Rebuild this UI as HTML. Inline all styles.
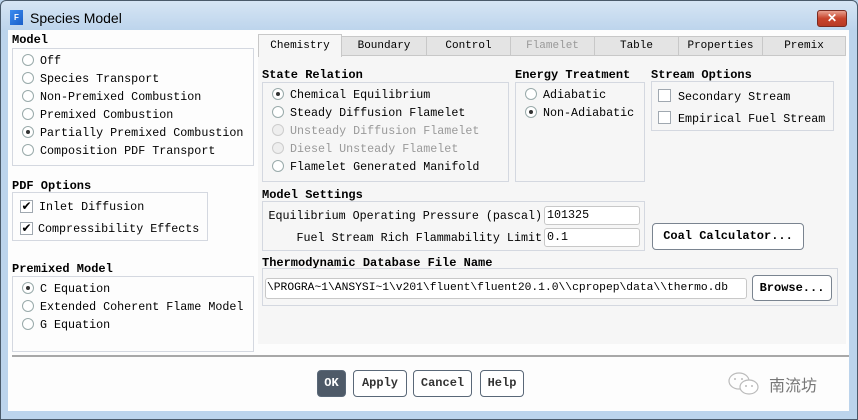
<!DOCTYPE html>
<html><head><meta charset="utf-8"><style>
*{box-sizing:border-box;margin:0;padding:0}
body{width:858px;height:420px;overflow:hidden;background:#bcd4ec;font-family:"Liberation Mono","Noto Sans CJK SC",monospace;font-size:11.7px;color:#000;position:relative}
.a{position:absolute;white-space:nowrap}
.frame{position:absolute;left:0;top:0;width:858px;height:420px;border:1px solid #4a5a6a;border-radius:6px 6px 0 0;background:linear-gradient(#d6e5f4,#bcd4ec 30px)}
.content{position:absolute;left:8px;top:30px;width:841px;height:381px;background:#fdfdfd}
.lbl{font-weight:bold;font-size:12px}
.box{position:absolute;border:1px solid #d4d8e0}
.r{position:absolute;width:12px;height:12px;border:1px solid #9aa;border-radius:50%;background:#fff}
.r.on::after{content:"";position:absolute;left:3px;top:3px;width:4px;height:4px;border-radius:50%;background:#333}
.r.dis{background:#eee;border-color:#ccc}
.cb{position:absolute;width:13px;height:13px;border:1px solid #a0a8b0;background:#fff;font-size:12px;line-height:11px;text-align:center;font-family:"DejaVu Sans",sans-serif}
.gray{color:#999}
.tab{position:absolute;top:36px;height:20px;border:1px solid #c8c8c8;background:#e4e4e4;text-align:center;font-size:11px;line-height:19px}
.inp{position:absolute;border:1px solid #c8c8c8;border-radius:3px;background:#fff;padding-left:2px;line-height:17px}
.btn{position:absolute;border:1px solid #5a6878;border-radius:4px;background:#fff;text-align:center;font-weight:bold;font-size:12px}
</style></head><body>
<div class="frame"></div>
<div class="a" style="left:10px;top:10px;width:13px;height:15px;background:linear-gradient(135deg,#3a8cf0,#1a5ec8);color:#fff;font:bold 8px 'Liberation Sans';text-align:center;line-height:15px">F</div>
<div class="a" style="left:30px;top:10px;font:14px 'Liberation Sans',sans-serif;color:#000">Species Model</div>
<div class="a" style="left:817px;top:10px;width:30px;height:17px;border:1px solid #7a2a20;border-radius:3px;background:linear-gradient(#e8a090,#c8442c 50%,#b83a24);color:#fff;text-align:center;font:bold 12px 'Liberation Sans';line-height:15px">✕</div>
<div class="content"></div>

<div class="a lbl" style="left:12px;top:33px">Model</div>
<div class="box" style="left:12px;top:48px;width:242px;height:118px"></div>
<div class="r" style="left:22px;top:54px"></div><div class="a" style="left:40px;top:54px">Off</div>
<div class="r" style="left:22px;top:72px"></div><div class="a" style="left:40px;top:72px">Species Transport</div>
<div class="r" style="left:22px;top:90px"></div><div class="a" style="left:40px;top:90px">Non-Premixed Combustion</div>
<div class="r" style="left:22px;top:108px"></div><div class="a" style="left:40px;top:108px">Premixed Combustion</div>
<div class="r on" style="left:22px;top:126px"></div><div class="a" style="left:40px;top:126px">Partially Premixed Combustion</div>
<div class="r" style="left:22px;top:144px"></div><div class="a" style="left:40px;top:144px">Composition PDF Transport</div>

<div class="a lbl" style="left:12px;top:179px">PDF Options</div>
<div class="box" style="left:12px;top:192px;width:196px;height:49px"></div>
<div class="cb" style="left:20px;top:200px">✔</div><div class="a" style="left:39px;top:200px">Inlet Diffusion</div>
<div class="cb" style="left:20px;top:222px">✔</div><div class="a" style="left:38px;top:222px">Compressibility Effects</div>

<div class="a lbl" style="left:12px;top:262px">Premixed Model</div>
<div class="box" style="left:12px;top:276px;width:242px;height:76px"></div>
<div class="r on" style="left:22px;top:282px"></div><div class="a" style="left:40px;top:282px">C Equation</div>
<div class="r" style="left:22px;top:300px"></div><div class="a" style="left:40px;top:300px">Extended Coherent Flame Model</div>
<div class="r" style="left:22px;top:318px"></div><div class="a" style="left:40px;top:318px">G Equation</div>

<div class="a" style="left:12px;top:355px;width:837px;height:2px;background:#a8a8a8"></div>

<div class="a" style="left:258px;top:56px;width:588px;height:288px;background:#f6f6f6"></div>
<div class="tab" style="left:258px;top:34px;width:84px;height:23px;background:#f6f6f6;border-bottom:none;line-height:22px">Chemistry</div>
<div class="tab" style="left:341px;width:86px">Boundary</div>
<div class="tab" style="left:426px;width:85px">Control</div>
<div class="tab gray" style="left:510px;width:85px">Flamelet</div>
<div class="tab" style="left:594px;width:85px">Table</div>
<div class="tab" style="left:678px;width:85px">Properties</div>
<div class="tab" style="left:762px;width:84px">Premix</div>

<div class="a lbl" style="left:262px;top:68px">State Relation</div>
<div class="box" style="left:262px;top:82px;width:247px;height:100px"></div>
<div class="r on" style="left:272px;top:88px"></div><div class="a" style="left:290px;top:88px">Chemical Equilibrium</div>
<div class="r" style="left:272px;top:106px"></div><div class="a" style="left:290px;top:106px">Steady Diffusion Flamelet</div>
<div class="r dis" style="left:272px;top:124px"></div><div class="a gray" style="left:290px;top:124px">Unsteady Diffusion Flamelet</div>
<div class="r dis" style="left:272px;top:142px"></div><div class="a gray" style="left:290px;top:142px">Diesel Unsteady Flamelet</div>
<div class="r" style="left:272px;top:160px"></div><div class="a" style="left:290px;top:160px">Flamelet Generated Manifold</div>

<div class="a lbl" style="left:515px;top:68px">Energy Treatment</div>
<div class="box" style="left:515px;top:82px;width:130px;height:100px"></div>
<div class="r" style="left:525px;top:88px"></div><div class="a" style="left:543px;top:88px">Adiabatic</div>
<div class="r on" style="left:525px;top:106px"></div><div class="a" style="left:543px;top:106px">Non-Adiabatic</div>

<div class="a lbl" style="left:651px;top:68px">Stream Options</div>
<div class="box" style="left:651px;top:81px;width:183px;height:50px"></div>
<div class="cb" style="left:658px;top:89px"></div><div class="a" style="left:678px;top:90px">Secondary Stream</div>
<div class="cb" style="left:658px;top:111px"></div><div class="a" style="left:678px;top:112px">Empirical Fuel Stream</div>

<div class="a lbl" style="left:262px;top:188px">Model Settings</div>
<div class="box" style="left:262px;top:201px;width:383px;height:50px"></div>
<div class="a" style="right:316px;top:209px">Equilibrium Operating Pressure (pascal)</div>
<div class="inp" style="left:544px;top:206px;width:96px;height:19px">101325</div>
<div class="a" style="right:316px;top:231px">Fuel Stream Rich Flammability Limit</div>
<div class="inp" style="left:544px;top:228px;width:96px;height:19px">0.1</div>
<div class="btn" style="left:652px;top:223px;width:152px;height:27px;line-height:25px;border-color:#7a8490">Coal Calculator...</div>

<div class="a lbl" style="left:262px;top:256px">Thermodynamic Database File Name</div>
<div class="box" style="left:262px;top:268px;width:576px;height:38px"></div>
<div class="inp" style="left:265px;top:278px;width:482px;height:21px;line-height:19px;font-size:11.3px;padding-left:1px;overflow:hidden">\PROGRA~1\ANSYSI~1\v201\fluent\fluent20.1.0\\cpropep\data\\thermo.db</div>
<div class="btn" style="left:752px;top:275px;width:80px;height:26px;line-height:24px;border-color:#7a8490">Browse...</div>

<div class="btn" style="left:317px;top:370px;width:29px;height:27px;line-height:25px;background:#4e5a68;color:#fff">OK</div>
<div class="btn" style="left:353px;top:370px;width:54px;height:27px;line-height:25px;color:#333">Apply</div>
<div class="btn" style="left:413px;top:370px;width:59px;height:27px;line-height:25px;color:#333">Cancel</div>
<div class="btn" style="left:480px;top:370px;width:44px;height:27px;line-height:25px;color:#333">Help</div>

<svg class="a" style="left:727px;top:370px" width="36" height="28" viewBox="0 0 36 28">
<ellipse cx="12" cy="11" rx="10" ry="8" fill="none" stroke="#bbb" stroke-width="1.2"/>
<ellipse cx="22" cy="17" rx="9" ry="7" fill="#fff" stroke="#bbb" stroke-width="1.2"/>
<circle cx="8" cy="9" r="1" fill="#bbb"/><circle cx="15" cy="9" r="1" fill="#bbb"/>
<circle cx="19" cy="16" r="1" fill="#bbb"/><circle cx="25" cy="16" r="1" fill="#bbb"/>
</svg>
<div class="a" style="left:769px;top:372px;font:16px 'Noto Sans CJK SC',sans-serif;color:#777">南流坊</div>
</body></html>
